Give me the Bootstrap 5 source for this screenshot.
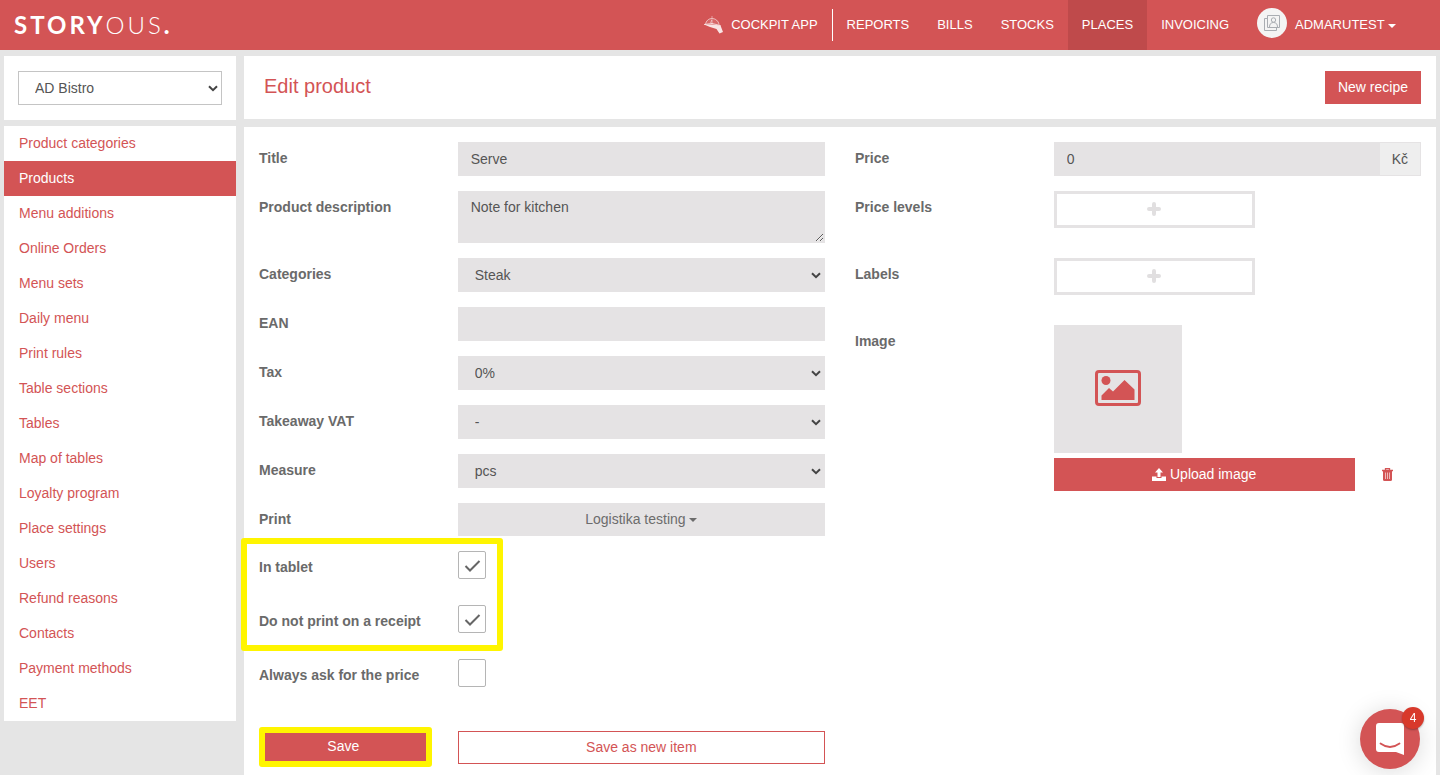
<!DOCTYPE html>
<html lang="en">
<head>
<meta charset="utf-8">
<meta name="viewport" content="width=device-width, initial-scale=1">
<title>Edit product – Storyous</title>
<link href="https://cdn.jsdelivr.net/npm/bootstrap@5.3.0/dist/css/bootstrap.min.css" rel="stylesheet">
<style>
:root { --brand: #d35455; --field: #e5e3e4; --label: #6a6a6a; --marker: #fff500; }
body { font-family: "Liberation Sans", Arial, sans-serif; font-size: 14px; line-height: 20px; color: #555; background: #e5e5e5; }

/* top bar */
.topbar { background: var(--brand); min-height: 50px; padding: 0 30px 0 14px; }
.brand-logo { font-family: Lato, sans-serif; font-size: 24px; line-height: 50px; font-weight: 700; letter-spacing: 3px; color: #fff; text-decoration: none; }
.brand-logo .thin { font-weight: 300; }
.brand-logo .dot { font-weight: 900; }
.topbar .nav-link { color: #fff; font-size: 13px; line-height: 20px; padding: 15px 14px; }
.topbar .nav-link.active { background: #bf4a4b; }
.topbar .split { width: 1px; height: 32px; background: #fff; }
.avatar { width: 30px; height: 30px; background: #f4f4f4; }
.caret { display: inline-block; border: 4px solid transparent; border-top-color: currentColor; border-bottom: 0; vertical-align: middle; }

/* panels */
.layout { padding: 6px 0 0; }
.layout > div { padding: 0 4px; }
.panel { background: #fff; }
.place-panel { padding: 15px 14px; margin-bottom: 6px; }
.title-panel { padding: 15px 15px 15px 20px; margin-bottom: 8px; }
.title-panel h1 { font-size: 20px; line-height: 30px; font-weight: 400; color: var(--brand); }
.form-panel { padding: 15px 15px 8px; }
.side-menu .nav-link { color: var(--brand); padding: 7px 15px 8px; }
.side-menu .nav-link.active { background: var(--brand); color: #fff; }

/* form */
.form-panel .row { --bs-gutter-x: 30px; }
.field-row { margin-bottom: 15px; }
.field-row.tall { margin-bottom: 30px; }
.form-panel .col-form-label { font-weight: 700; color: var(--label); padding-top: 6px; padding-bottom: 0; line-height: 20px; }
.form-control, .form-select { font-size: 14px; line-height: 20px; color: #555; border-radius: 0; border: 1px solid var(--field); background-color: var(--field); height: 34px; padding: 6px 12px; }
textarea.form-control { height: 52px; min-height: 52px; display: block; padding-top: 5px; }
.form-select { padding: 6px 24px 6px 16px; background-size: 10px 7px; background-position: right 3px center; background-image: url("data:image/svg+xml,%3Csvg xmlns='http://www.w3.org/2000/svg' viewBox='0 0 10 7'%3E%3Cpath d='M1 1.2l4 4 4-4' fill='none' stroke='%23444' stroke-width='2'/%3E%3C/svg%3E"); }
.place-panel .form-select { background-color: #fff; border-color: #c4c4c4; }
.input-group-text { font-size: 14px; line-height: 20px; color: #555; background: #eee; border: 1px solid var(--field); border-radius: 0; padding: 6px 12px; }
.btn { font-size: 14px; line-height: 21px; border-radius: 0; padding: 5px 12px; }
.btn-brand, .btn-brand:hover { background: var(--brand); border-color: var(--brand); color: #fff; }
.btn-line, .btn-line:hover { background: #fff; border-color: var(--brand); color: var(--brand); }
.btn-field, .btn-field:hover { background: var(--field); border-color: var(--field); color: #6c6c6c; }
.btn-add { width: 201px; height: 37px; border: 3px solid var(--field); padding: 0 0 2px; background: #fff; }
.form-check-input { width: 28px; height: 28px; margin: 0; border: 1px solid #b5b5b5; display: block; }
.form-check-input[type=checkbox] { border-radius: 2px; }
.form-check-input:checked[type=checkbox] { background-color: #fff; border-color: #b5b5b5; background-size: 26px 26px; background-image: url("data:image/svg+xml,%3Csvg xmlns='http://www.w3.org/2000/svg' viewBox='0 0 26 26'%3E%3Cpath d='M6.500 14l4.500 4.500L20.500 9' fill='none' stroke='%23666' stroke-width='2'/%3E%3C/svg%3E"); }
.check-row { margin-bottom: 26px; }
.thumb { width: 128px; height: 128px; background: var(--field); margin-bottom: 5px; padding-bottom: 2px; }

/* highlight frames */
.marked::after { content: ""; position: absolute; pointer-events: none; top: -13px; bottom: -18px; left: -18px; width: calc(33.3333% + 73px); border: 6px solid var(--marker); border-radius: 3px; }
.btn-marked, .btn-marked:hover { border: 6px solid var(--marker); border-radius: 3px; padding: 3px 8px 4px 4px; }
.actions { margin-top: 40px; }
.actions .save-col { padding-right: 11px; }

/* chat launcher */
.chat { right: 20px; bottom: 6px; width: 60px; height: 60px; background: var(--brand); box-shadow: 0 2px 24px rgba(0,0,0,.15); }
.chat-count { top: -2px; right: -4px; width: 22px; height: 22px; background: #d8392b; color: #fff; font-size: 12px; line-height: 22px; box-shadow: 0 1px 2px rgba(0,0,0,.3); }
</style>
</head>
<body class="d-flex flex-column min-vh-100">
<header class="topbar d-flex align-items-center justify-content-between">
  <a href="#" class="brand-logo">STORY<span class="thin">OUS</span><span class="dot">.</span></a>
  <nav class="nav align-items-center flex-nowrap">
    <a class="nav-link d-flex align-items-center gap-2" href="#">
      <svg width="19" height="18" viewBox="0 0 19 18" aria-hidden="true"><path d="M1.500 8.500C2 5 4.500 2.500 8 2.500S14.500 5 15 8.500" fill="#fff" fill-opacity=".12" stroke="#fff" stroke-opacity=".6"/><path d="M8 0v2M8 4v4M6.500 7L8 3.500" stroke="#fff" stroke-opacity=".45"/><path d="M0 8.500l8-1 8.500 2" fill="none" stroke="#fff" stroke-opacity=".7"/><path d="M0 8.500l8 0 8.500 1L19 16l-3.500 1.500-3-4.500L6 11z" fill="#fff" fill-opacity=".85"/></svg>
      COCKPIT APP</a>
    <span class="split"></span>
    <a class="nav-link" href="#">REPORTS</a>
    <a class="nav-link" href="#">BILLS</a>
    <a class="nav-link" href="#">STOCKS</a>
    <a class="nav-link active" href="#" aria-current="page">PLACES</a>
    <a class="nav-link" href="#">INVOICING</a>
    <a class="nav-link d-flex align-items-center gap-2 py-0" href="#">
      <span class="avatar rounded-circle d-flex align-items-center justify-content-center mb-1"><svg width="16" height="16" viewBox="0 0 16 16" fill="none" stroke="#a9adb2" aria-hidden="true"><path d="M3.500.5h12v12h-12zM3.500 3.500h-3v12h12v-3"/><circle cx="9.500" cy="5" r="2.200"/><path d="M5.500 12c0-3 1.500-4.500 4-4.500s4 1.500 4 4.500"/></svg></span>
      <span>ADMARUTEST <span class="caret"></span></span></a>
  </nav>
</header>

<div class="container-fluid flex-grow-1 d-flex flex-column px-0">
<div class="layout row g-0 flex-grow-1">
  <div class="col-2">
    <div class="panel place-panel">
      <select class="form-select" aria-label="Place"><option>AD Bistro</option></select>
    </div>
    <nav class="panel side-menu nav flex-column">
      <a class="nav-link" href="#">Product categories</a>
      <a class="nav-link active" href="#" aria-current="page">Products</a>
      <a class="nav-link" href="#">Menu additions</a>
      <a class="nav-link" href="#">Online Orders</a>
      <a class="nav-link" href="#">Menu sets</a>
      <a class="nav-link" href="#">Daily menu</a>
      <a class="nav-link" href="#">Print rules</a>
      <a class="nav-link" href="#">Table sections</a>
      <a class="nav-link" href="#">Tables</a>
      <a class="nav-link" href="#">Map of tables</a>
      <a class="nav-link" href="#">Loyalty program</a>
      <a class="nav-link" href="#">Place settings</a>
      <a class="nav-link" href="#">Users</a>
      <a class="nav-link" href="#">Refund reasons</a>
      <a class="nav-link" href="#">Contacts</a>
      <a class="nav-link" href="#">Payment methods</a>
      <a class="nav-link" href="#">EET</a>
    </nav>
  </div>

  <main class="col-10 d-flex flex-column px-1">
    <div class="panel title-panel d-flex justify-content-between align-items-start">
      <h1 class="m-0">Edit product</h1>
      <button type="button" class="btn btn-brand">New recipe</button>
    </div>
    <form class="panel form-panel flex-grow-1">
      <div class="row">
        <div class="col-6">
          <div class="row field-row">
            <label class="col-4 col-form-label" for="title">Title</label>
            <div class="col-8"><input type="text" class="form-control" id="title" value="Serve"></div>
          </div>
          <div class="row field-row">
            <label class="col-4 col-form-label" for="desc">Product description</label>
            <div class="col-8"><textarea class="form-control" id="desc">Note for kitchen</textarea></div>
          </div>
          <div class="row field-row">
            <label class="col-4 col-form-label" for="cat">Categories</label>
            <div class="col-8"><select class="form-select" id="cat"><option>Steak</option></select></div>
          </div>
          <div class="row field-row">
            <label class="col-4 col-form-label" for="ean">EAN</label>
            <div class="col-8"><input type="text" class="form-control" id="ean"></div>
          </div>
          <div class="row field-row">
            <label class="col-4 col-form-label" for="tax">Tax</label>
            <div class="col-8"><select class="form-select" id="tax"><option>0%</option></select></div>
          </div>
          <div class="row field-row">
            <label class="col-4 col-form-label" for="vat">Takeaway VAT</label>
            <div class="col-8"><select class="form-select" id="vat"><option>-</option></select></div>
          </div>
          <div class="row field-row">
            <label class="col-4 col-form-label" for="measure">Measure</label>
            <div class="col-8"><select class="form-select" id="measure"><option>pcs</option></select></div>
          </div>
          <div class="row field-row">
            <label class="col-4 col-form-label" for="print">Print</label>
            <div class="col-8"><button type="button" class="btn btn-field w-100 d-block" id="print">Logistika testing <span class="caret"></span></button></div>
          </div>
          <div class="position-relative marked check-row">
            <div class="row check-row">
              <label class="col-4 col-form-label" for="tablet">In tablet</label>
              <div class="col-8"><input type="checkbox" class="form-check-input" id="tablet" checked></div>
            </div>
            <div class="row">
              <label class="col-4 col-form-label" for="receipt">Do not print on a receipt</label>
              <div class="col-8"><input type="checkbox" class="form-check-input" id="receipt" checked></div>
            </div>
          </div>
          <div class="row">
            <label class="col-4 col-form-label" for="ask">Always ask for the price</label>
            <div class="col-8"><input type="checkbox" class="form-check-input" id="ask"></div>
          </div>
          <div class="row actions align-items-center">
            <div class="col-4 save-col"><button type="submit" class="btn btn-brand btn-marked w-100 d-block">Save</button></div>
            <div class="col-8"><button type="button" class="btn btn-line w-100 d-block">Save as new item</button></div>
          </div>
        </div>

        <div class="col-6">
          <div class="row field-row">
            <label class="col-4 col-form-label" for="price">Price</label>
            <div class="col-8"><div class="input-group flex-nowrap"><input type="text" class="form-control" id="price" value="0"><span class="input-group-text">Kč</span></div></div>
          </div>
          <div class="row field-row tall">
            <label class="col-4 col-form-label" for="levels">Price levels</label>
            <div class="col-8"><button type="button" class="btn btn-add d-flex align-items-center justify-content-center" id="levels" aria-label="Add price level"><svg width="14" height="14" viewBox="0 0 14 14" aria-hidden="true"><path d="M7 2v10M2 7h10" stroke="#e1dfe0" stroke-width="4" stroke-linecap="round"/></svg></button></div>
          </div>
          <div class="row field-row tall">
            <label class="col-4 col-form-label" for="labels">Labels</label>
            <div class="col-8"><button type="button" class="btn btn-add d-flex align-items-center justify-content-center" id="labels" aria-label="Add label"><svg width="14" height="14" viewBox="0 0 14 14" aria-hidden="true"><path d="M7 2v10M2 7h10" stroke="#e1dfe0" stroke-width="4" stroke-linecap="round"/></svg></button></div>
          </div>
          <div class="row field-row">
            <label class="col-4 col-form-label" for="upload">Image</label>
            <div class="col-8">
              <div class="thumb d-flex align-items-center justify-content-center">
                <svg width="46" height="36" viewBox="0 0 46 36" aria-hidden="true"><rect x="1.500" y="1.500" width="43" height="33" rx="2.500" fill="none" stroke="#d35455" stroke-width="3"/><circle cx="11" cy="10.500" r="4.500" fill="#d35455"/><path d="M6.500 30v-4.500l7.500-7.500 4 3.500L29.500 10l10 9.500V30z" fill="#d35455"/></svg>
              </div>
              <div class="row">
                <div class="col-10"><button type="button" class="btn btn-brand w-100 d-flex align-items-center justify-content-center gap-1" id="upload"><svg width="14" height="13" viewBox="0 0 14 13" fill="#fff" aria-hidden="true"><path d="M7 0l4 4.500H8.500V9h-3V4.500H3z"/><path d="M0 8.500h4.500V10h5V8.500H14V13H0z"/></svg>Upload image</button></div>
                <div class="col-2 ps-0 d-flex align-items-center"><button type="button" class="btn border-0" aria-label="Remove image"><svg class="d-block" width="11" height="13" viewBox="0 0 11 13" aria-hidden="true"><path d="M3.500 2V.7h4V2M0 2.500h11" fill="none" stroke="#d35455" stroke-width="1.300"/><path d="M1 3h9v8.500q0 1.500-1.500 1.500h-6Q1 13 1 11.500z" fill="#d35455"/><path d="M3.500 4.500v6.500M5.500 4.500v6.500M7.500 4.500v6.500" stroke="#fff" stroke-opacity=".75" stroke-width=".8"/></svg></button></div>
              </div>
            </div>
          </div>
        </div>
      </div>
    </form>
  </main>
</div>
</div>

<button type="button" class="chat position-fixed border-0 rounded-circle p-0 d-flex align-items-center justify-content-center" aria-label="Open messages">
  <svg width="28" height="32" viewBox="0 0 28 32" aria-hidden="true"><path d="M3 0h22q3 0 3 3v29l-8-3H3q-3 0-3-3V3q0-3 3-3z" fill="#fff"/><path d="M4.500 20.500q9.500 7 19 0" fill="none" stroke="#d35455" stroke-width="1.800" stroke-linecap="round"/></svg>
  <span class="chat-count position-absolute rounded-circle text-center">4</span>
</button>
<script src="https://cdn.jsdelivr.net/npm/bootstrap@5.3.0/dist/js/bootstrap.bundle.min.js"></script>
</body>
</html>
